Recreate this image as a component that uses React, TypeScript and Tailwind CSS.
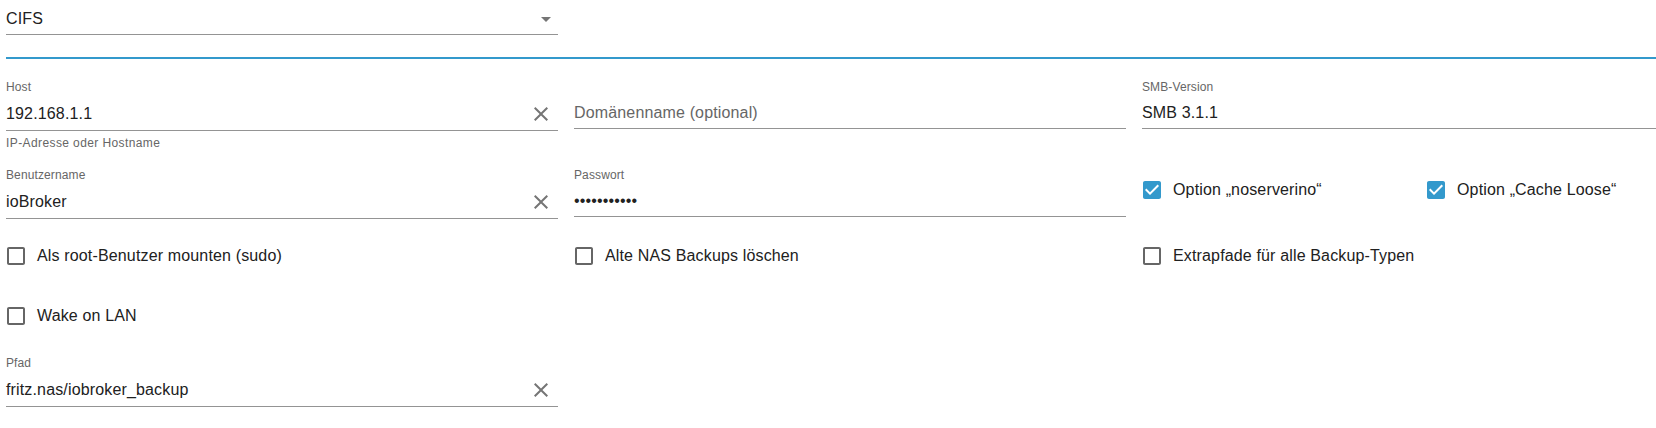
import type { ReactNode } from 'react'

const CLEAR = 'M19 6.41 17.59 5 12 10.59 6.41 5 5 6.41 10.59 12 5 17.59 6.41 19 12 13.41 17.59 19 19 17.59 13.41 12z'
const BOX_BLANK = 'M19 5v14H5V5h14m0-2H5c-1.11 0-2 .9-2 2v14c0 1.1.89 2 2 2h14c1.11 0 2-.9 2-2V5c0-1.1-.89-2-2-2z'
const BOX_CHECKED = 'M19 3H5c-1.11 0-2 .9-2 2v14c0 1.1.89 2 2 2h14c1.11 0 2-.9 2-2V5c0-1.1-.89-2-2-2zm-9 14l-5-5 1.41-1.41L10 14.17l7.59-7.59L19 8l-9 9z'

function Icon({ d, className }: { d: string; className?: string }) {
  return (
    <svg viewBox="0 0 24 24" className={`w-6 h-6 shrink-0 fill-current ${className ?? ''}`}>
      <path d={d} />
    </svg>
  )
}

interface FieldProps {
  label?: string
  value?: string
  placeholder?: string
  helper?: string
  clearable?: boolean
  className?: string
}

// standard-variant text field, label on top, underline at the bottom
function Field({ label, value, placeholder, helper, clearable, className }: FieldProps) {
  return (
    <div className={`flex flex-col ${className ?? ''}`}>
      <div className="h-4 text-[12px] leading-[12px] tracking-[0.01em] text-[#666666]">{label}</div>
      <div
        className={`flex items-center border-b border-[#949494] ${clearable ? 'h-[34px]' : 'h-[32px]'}`}
      >
        <div
          className={`flex-1 text-[16px] leading-[23px] tracking-[0.00938em] whitespace-nowrap ${value ? 'text-[#212121]' : 'text-[#666666]'}`}
        >
          {value ?? placeholder}
        </div>
        {clearable && <Icon d={CLEAR} className="mr-[5px] text-[#757575]" />}
      </div>
      {helper && (
        <div className="mt-[2px] text-[12px] leading-[20px] tracking-[0.03333em] text-[#666666]">
          {helper}
        </div>
      )}
    </div>
  )
}

function Check({ label, checked, className }: { label: ReactNode; checked?: boolean; className?: string }) {
  return (
    <label className={`flex items-center -ml-[11px] h-[42px] ${className ?? ''}`}>
      <span className="p-[9px]">
        <Icon
          d={checked ? BOX_CHECKED : BOX_BLANK}
          className={checked ? 'text-[#3399cc]' : 'text-[#666666]'}
        />
      </span>
      <span className="text-[16px] leading-[24px] tracking-[0.00938em] text-[#212121] whitespace-nowrap">
        {label}
      </span>
    </label>
  )
}

export default function App() {
  return (
    <div className="w-[1656px] h-[428px] overflow-hidden bg-white font-['Liberation_Sans',Arial,sans-serif]">
      <div className="pl-[6px]">
        {/* Typ-Auswahl */}
        <div className="w-[552px] h-[35px] border-b border-[#949494] flex items-start pt-[7px]">
          <div className="flex-1 text-[16px] leading-[23px] tracking-[0.00938em] text-[#212121]">CIFS</div>
          <svg viewBox="0 0 24 24" className="w-6 h-6 fill-[#757575]">
            <path d="M7 10l5 5 5-5z" />
          </svg>
        </div>

        <div className="mt-[22px] h-[2px] bg-[#3399cc]" />

        <div className="mt-[22px] grid grid-cols-[552px_552px_552px] gap-x-4 gap-y-4 items-start">
          <Field label="Host" value="192.168.1.1" helper="IP-Adresse oder Hostname" clearable />
          <Field placeholder="Domänenname (optional)" />
          <Field label="SMB-Version" value="SMB 3.1.1" />

          <Field label="Benutzername" value="ioBroker" clearable />
          <Field label="Passwort" value="•••••••••••" />
          <div className="grid grid-cols-2 gap-x-4">
            <Check label="Option „noserverino“" checked />
            <Check label="Option „Cache Loose“" checked />
          </div>

          <Check label="Als root-Benutzer mounten (sudo)" />
          <Check label="Alte NAS Backups löschen" />
          <Check label="Extrapfade für alle Backup-Typen" />

          <Check label="Wake on LAN" className="mt-[2px]" />
          <div />
          <div />

          <Field label="Pfad" value="fritz.nas/iobroker_backup" clearable className="mt-[4px]" />
        </div>
      </div>
    </div>
  )
}
